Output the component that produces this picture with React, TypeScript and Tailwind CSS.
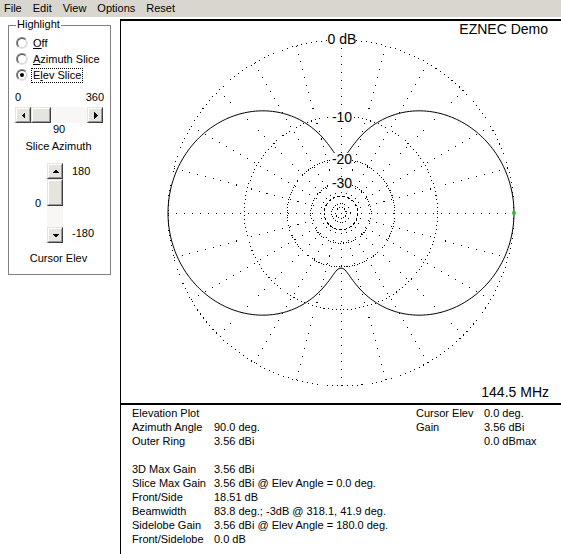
import React from "react";

const CX = 220;
const CY = 192;
const R = 173;

function radiusFor(db: number) {
  return R * Math.pow(0.89, -db / 2);
}

function patternPath() {
  const pts: string[] = [];
  for (let d = 0; d <= 360; d += 1) {
    const t = (d * Math.PI) / 180;
    const c = Math.abs(Math.cos(t));
    const p = (Math.pow(c, 2.4) + 0.011) / 1.011;
    const db = 10 * Math.log10(p);
    const r = radiusFor(db);
    const x = CX + r * Math.cos(t);
    const y = CY - r * Math.sin(t);
    pts.push(`${d === 0 ? "M" : "L"}${x.toFixed(2)},${y.toFixed(2)}`);
  }
  return pts.join(" ");
}

function Arrow({ dir }: { dir: "left" | "right" | "up" | "down" }) {
  const pts =
    dir === "left"
      ? "5,1 5,8 1.5,4.5"
      : dir === "right"
      ? "2,1 2,8 5.5,4.5"
      : dir === "up"
      ? "1,5 8,5 4.5,1.5"
      : "1,2 8,2 4.5,5.5";
  const w = dir === "left" || dir === "right" ? 7 : 9;
  const h = dir === "left" || dir === "right" ? 9 : 7;
  return (
    <svg width={w} height={h} viewBox={`0 0 ${w} ${h}`} shapeRendering="crispEdges">
      <polygon points={pts} fill="#000" />
    </svg>
  );
}

function Btn({ children, className = "" }: { children?: React.ReactNode; className?: string }) {
  return (
    <div
      className={`flex items-center justify-center bg-[#e6e4df] border border-t-[#e6e4df] border-l-[#e6e4df] border-r-[#404040] border-b-[#404040] ${className}`}
    >
      <div className="w-full h-full flex items-center justify-center border border-t-white border-l-white border-r-[#9a9a9a] border-b-[#9a9a9a]">
        {children}
      </div>
    </div>
  );
}

function Radio({ checked, label, focus }: { checked?: boolean; label: React.ReactNode; focus?: boolean }) {
  return (
    <div className="flex items-center h-[16px]">
      <div className="w-[12px] h-[12px] rounded-full border border-t-[#808080] border-l-[#808080] border-r-[#e8e6e2] border-b-[#e8e6e2] flex items-center justify-center">
        <div className="w-[10px] h-[10px] rounded-full bg-white border border-t-[#505050] border-l-[#505050] border-r-[#d4d0c8] border-b-[#d4d0c8] flex items-center justify-center">
          {checked && <div className="w-[4px] h-[4px] rounded-full bg-black" />}
        </div>
      </div>
      <span
        className={`ml-[4px] px-[1px] leading-[13px] ${focus ? "outline outline-1 outline-dotted outline-black" : ""}`}
      >
        {label}
      </span>
    </div>
  );
}

const leftRows: [string, string][] = [
  ["Elevation Plot", ""],
  ["Azimuth Angle", "90.0 deg."],
  ["Outer Ring", "3.56 dBi"],
  ["", ""],
  ["3D Max Gain", "3.56 dBi"],
  ["Slice Max Gain", "3.56 dBi @ Elev Angle = 0.0 deg."],
  ["Front/Side", "18.51 dB"],
  ["Beamwidth", "83.8 deg.; -3dB @ 318.1, 41.9 deg."],
  ["Sidelobe Gain", "3.56 dBi @ Elev Angle = 180.0 deg."],
  ["Front/Sidelobe", "0.0 dB"],
];

const rightRows: [string, string][] = [
  ["Cursor Elev", "0.0 deg."],
  ["Gain", "3.56 dBi"],
  ["", "0.0 dBmax"],
];

export default function App() {
  const rings = [
    { db: 0, dash: "1 4" },
    { db: -10, dash: "1 3" },
    { db: -20, dash: "1 1.6" },
    { db: -30, dash: "1 1.6" },
    { db: -40, dash: "3 2" },
    { db: -50, dash: "1 1.5" },
    { db: -60, dash: "1 1.5" },
  ];
  const radials = Array.from({ length: 24 }, (_, i) => i * 15);
  const labels = [
    { t: "0 dB", y: 23 },
    { t: "-10", y: 101 },
    { t: "-20", y: 143 },
    { t: "-30", y: 167 },
  ];

  return (
    <div
      className="w-[561px] h-[554px] bg-white text-black overflow-hidden flex flex-col text-[11px]"
      style={{ fontFamily: '"Liberation Sans", Arial, sans-serif' }}
    >
      {/* Menu bar */}
      <div className="h-[17px] shrink-0 bg-[#d9d6cf] flex items-center pl-[4px] gap-[11px] leading-none pb-[1px]">
        <span>File</span>
        <span>Edit</span>
        <span>View</span>
        <span>Options</span>
        <span>Reset</span>
      </div>

      <div className="flex flex-1 min-h-0">
        {/* Left panel */}
        <div className="w-[120px] shrink-0 pt-[8px] pl-[8px]">
          <div className="relative w-[103px] h-[250px] border border-[#808080] flex flex-col pt-[9px]">
            <div className="absolute left-[7px] top-[-8px] bg-white px-[1px] leading-[13px]">Highlight</div>
            <div className="pl-[7px] flex flex-col">
              <Radio label={<><u>O</u>ff</>} />
              <Radio label={<><u>A</u>zimuth Slice</>} />
              <Radio checked focus label={<>E<u>l</u>ev Slice</>} />
            </div>
            <div className="ml-[6px] w-[89px] mt-[7px] h-[14px] flex justify-between items-center leading-[14px]">
              <span>0</span>
              <span>360</span>
            </div>
            <div className="ml-[6px] mt-[3px] w-[88px] h-[16px] flex">
              <Btn className="w-[16px] h-[16px]">
                <Arrow dir="left" />
              </Btn>
              <Btn className="w-[20px] h-[16px]" />
              <div className="flex-1 bg-[#f8f7f5]" />
              <Btn className="w-[16px] h-[16px]">
                <Arrow dir="right" />
              </Btn>
            </div>
            <div className="ml-[6px] w-[88px] h-[12px] leading-[12px] text-center">90</div>
            <div className="mt-[4px] h-[14px] leading-[14px] text-center pr-[2px]">Slice Azimuth</div>
            <div className="mt-[10px] flex h-[80px]">
              <div className="w-[38px] flex items-center justify-end pr-[6px] leading-[12px]">0</div>
              <div className="w-[16px] flex flex-col">
                <Btn className="w-[16px] h-[16px]">
                  <Arrow dir="up" />
                </Btn>
                <Btn className="w-[16px] h-[27px]" />
                <div className="flex-1 bg-[#f8f7f5]" />
                <Btn className="w-[16px] h-[16px]">
                  <Arrow dir="down" />
                </Btn>
              </div>
              <div className="ml-[9px] flex flex-col justify-between pt-[1px] pb-[3px] leading-[14px]">
                <span>180</span>
                <span>-180</span>
              </div>
            </div>
            <div className="mt-[8px] h-[14px] leading-[14px] text-center pr-[2px]">Cursor Elev</div>
          </div>
        </div>

        {/* Right area */}
        <div className="flex-1 flex flex-col mt-[2px] border-l border-black">
          <div className="h-[386px] shrink-0 border-t-2 border-b-2 border-black">
            <svg width="440" height="384" viewBox="0 0 440 384" className="block">
              <g fill="none" stroke="#000" strokeWidth="1" shapeRendering="crispEdges">
                {radials.map((a) => {
                  const t = (a * Math.PI) / 180;
                  const r0 = 17;
                  return (
                    <line
                      key={a}
                      x1={CX + R * Math.cos(t)}
                      y1={CY - R * Math.sin(t)}
                      x2={CX + r0 * Math.cos(t)}
                      y2={CY - r0 * Math.sin(t)}
                      strokeDasharray="1 7"
                    />
                  );
                })}
                {rings.map((r) => (
                  <circle key={r.db} cx={CX} cy={CY} r={radiusFor(r.db)} strokeDasharray={r.dash} />
                ))}
              </g>
              <rect x={CX} y={CY} width="1" height="1" fill="#000" />
              <path d={patternPath()} fill="none" stroke="#000" strokeWidth="1" />
              <circle cx={CX + R} cy={CY} r="2" fill="#22c522" />
              {labels.map((l) => (
                <g key={l.t}>
                  <rect
                    x={CX - (l.t.length > 3 ? 14 : 10)}
                    y={l.y - 11}
                    width={l.t.length > 3 ? 28 : 21}
                    height={12}
                    fill="#fff"
                  />
                  <text
                    x={CX + 1}
                    y={l.y}
                    textAnchor="middle"
                    fontSize="14"
                    fontFamily='"Liberation Sans", Arial, sans-serif'
                    fill="#000"
                  >
                    {l.t}
                  </text>
                </g>
              ))}
              <text
                x="427"
                y="13"
                textAnchor="end"
                fontSize="14"
                fontFamily='"Liberation Sans", Arial, sans-serif'
                fill="#000"
              >
                EZNEC Demo
              </text>
              <text
                x="428"
                y="376"
                textAnchor="end"
                fontSize="14"
                fontFamily='"Liberation Sans", Arial, sans-serif'
                fill="#000"
              >
                144.5 MHz
              </text>
            </svg>
          </div>
          <div className="flex-1 flex pt-[1px] pl-[11px] leading-[14px]">
            <div className="w-[284px] flex flex-col">
              {leftRows.map(([a, b], i) => (
                <div key={i} className="h-[14px] flex">
                  <span className="w-[82px] shrink-0">{a}</span>
                  <span className="whitespace-nowrap">{b}</span>
                </div>
              ))}
            </div>
            <div className="flex flex-col">
              {rightRows.map(([a, b], i) => (
                <div key={i} className="h-[14px] flex">
                  <span className="w-[68px] shrink-0">{a}</span>
                  <span className="whitespace-nowrap">{b}</span>
                </div>
              ))}
            </div>
          </div>
        </div>
      </div>
    </div>
  );
}
